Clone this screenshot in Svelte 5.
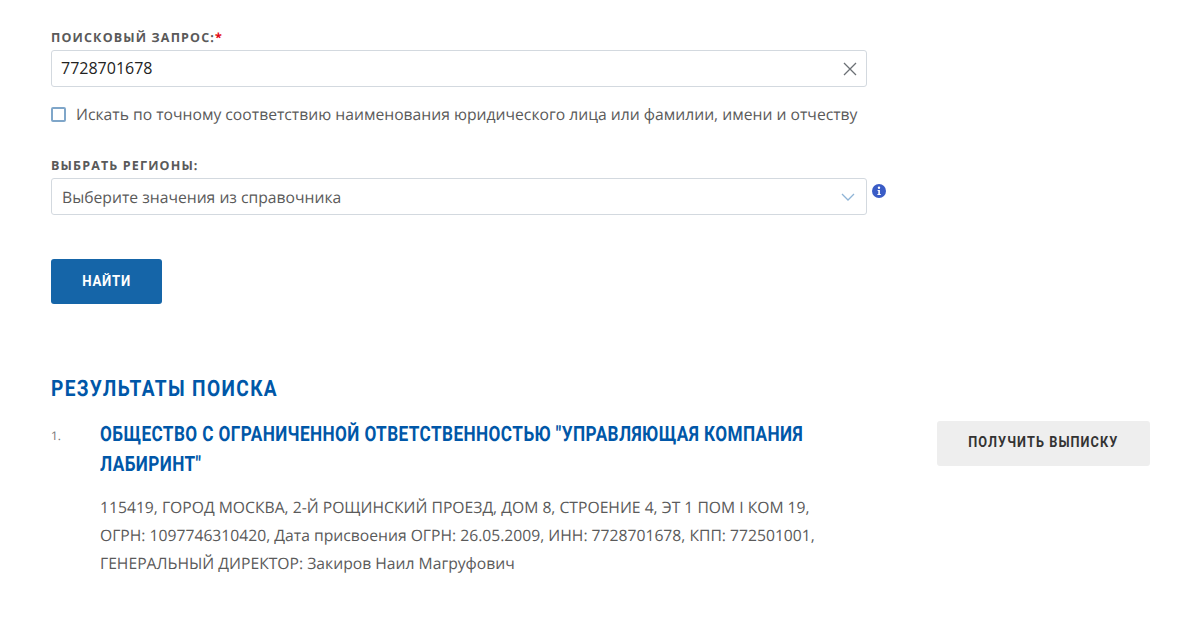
<script>
  let query = '7728701678'
</script>

<div class="page">
  <form class="search">
    <label class="label" for="q">Поисковый запрос:<span class="req">*</span></label>
    <div class="field">
      <input id="q" bind:value={query} />
      <svg class="clear" width="14" height="14" viewBox="0 0 14 14"><path d="M1 1l12 12M13 1L1 13" stroke="#6b7075" stroke-width="1.3" fill="none" /></svg>
    </div>

    <div class="check">
      <span class="box"></span>
      <span>Искать по точному соответствию наименования юридического лица или фамилии, имени и отчеству</span>
    </div>

    <div class="label regions">Выбрать регионы:</div>
    <div class="select-row">
      <div class="field select">
        <span>Выберите значения из справочника</span>
        <svg width="14" height="8" viewBox="0 0 14 8"><path d="M1 1l6 6 6-6" stroke="#8fb4d6" stroke-width="1.3" fill="none" /></svg>
      </div>
      <svg class="info" width="14" height="14" viewBox="0 0 14 14">
        <circle cx="7" cy="7" r="7" fill="#3a5cc6" />
        <circle cx="7" cy="3.8" r="1.2" fill="#fff" />
        <path d="M5.6 6h2.3v4h.9v1H5.4v-1h.9V7h-.7z" fill="#fff" />
      </svg>
    </div>

    <button type="button" class="find"><span>Найти</span></button>
  </form>

  <h2><span>Результаты поиска</span></h2>

  <div class="result">
    <div class="num">1.</div>
    <div class="body">
      <a class="title" href="#top">ОБЩЕСТВО С ОГРАНИЧЕННОЙ ОТВЕТСТВЕННОСТЬЮ "УПРАВЛЯЮЩАЯ КОМПАНИЯ ЛАБИРИНТ"</a>
      <p>115419, ГОРОД МОСКВА, 2-Й РОЩИНСКИЙ ПРОЕЗД, ДОМ 8, СТРОЕНИЕ 4, ЭТ 1 ПОМ I КОМ 19,<br />
        ОГРН: 1097746310420, Дата присвоения ОГРН: 26.05.2009, ИНН: 7728701678, КПП: 772501001,<br />
        ГЕНЕРАЛЬНЫЙ ДИРЕКТОР: Закиров Наил Магруфович</p>
    </div>
    <button type="button" class="extract"><span>Получить выписку</span></button>
  </div>
</div>

<style>
  :global(body) { background: #fff; }
  .page {
    height: 619px;
    box-sizing: border-box;
    overflow: hidden;
    padding: 29px 50px 0 51px;
    font-family: "Open Sans", "Noto Sans", sans-serif;
    color: #4a4a4a;
    text-rendering: geometricPrecision;
  }
  .search { width: 836px; }
  .label {
    display: block;
    font-size: 12.5px;
    line-height: 17px;
    font-weight: 700;
    letter-spacing: 1.15px;
    text-transform: uppercase;
    color: #5a5a5a;
  }
  .req { color: #e30613; }
  .field {
    width: 816px;
    height: 37px;
    margin-top: 4px;
    box-sizing: border-box;
    border: 1px solid #d3d9df;
    border-radius: 3px;
    display: flex;
    align-items: center;
    padding-right: 9px;
  }
  input {
    flex: 1;
    min-width: 0;
    border: 0;
    outline: 0;
    padding: 0 0 2px 9px;
    font: 16px "Open Sans", sans-serif;
    color: #222;
    background: none;
  }
  .check {
    display: flex;
    align-items: center;
    gap: 10px;
    margin-top: 16px;
    font-size: 15.7px;
    line-height: 22px;
    color: #5a5a5a;
    white-space: nowrap;
  }
  .box {
    width: 11px;
    height: 11px;
    border: 2px solid #7fa6c9;
    border-radius: 2px;
    flex: none;
  }
  .regions { margin-top: 32px; }
  .select-row { display: flex; gap: 5px; align-items: flex-start; }
  .select {
    justify-content: space-between;
    padding: 0 5px 0 10px;
    font-size: 15.7px;
    color: #5a5a5a;
  }
  .select svg { margin-right: 6px; }
  .info { margin-top: 10px; }
  .find {
    display: block;
    width: 111px;
    height: 45px;
    margin-top: 44px;
    padding: 0 0 2px;
    border: 0;
    border-radius: 3px;
    background: #1565a8;
    color: #fff;
    font: 700 15.5px "Roboto", sans-serif;
    letter-spacing: 0.9px;
    text-transform: uppercase;
  }
  .find span, .extract span { display: inline-block; transform: scaleX(.85); white-space: nowrap; }
  h2 {
    margin: 71px 0 0;
    font: 700 22.5px/28px "Roboto", sans-serif;
    letter-spacing: 1.6px;
    text-transform: uppercase;
    color: #0057a8;
  }
  h2 span { display: inline-block; transform: scaleX(.85); transform-origin: left; white-space: nowrap; }
  .result { display: flex; align-items: flex-start; margin-top: 18px; }
  .num { width: 49px; flex: none; font-size: 12px; line-height: 29px; color: #777; }
  .body { width: 730px; flex: none; }
  .title {
    display: block;
    width: 860px;
    transform: scaleX(.818);
    transform-origin: left;
    font: 700 21px/29.5px "Roboto", sans-serif;
    letter-spacing: 0.5px;
    color: #0057a8;
    text-decoration: none;
  }
  p {
    margin: 13px 0 0;
    font-size: 15.7px;
    line-height: 28.2px;
    color: #5a5a5a;
    white-space: nowrap;
  }
  .extract {
    width: 213px;
    height: 45px;
    margin-left: auto;
    padding: 0 0 4px;
    flex: none;
    border: 0;
    border-radius: 3px;
    background: #eeeeee;
    color: #333;
    font: 700 15px "Roboto", sans-serif;
    letter-spacing: 1.25px;
    text-transform: uppercase;
  }
</style>
